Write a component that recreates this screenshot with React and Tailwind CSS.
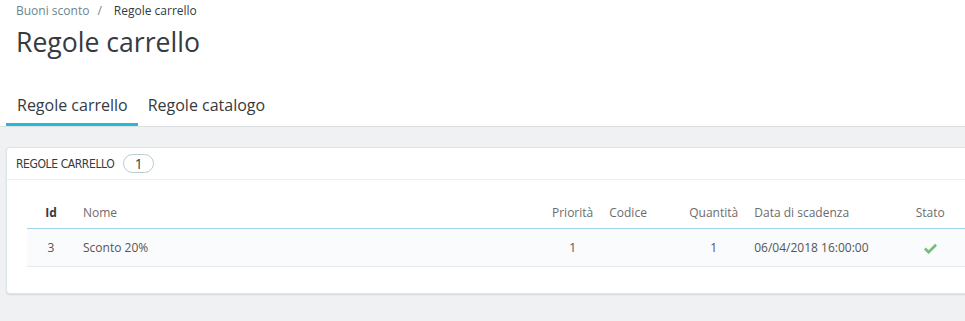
import React from 'react';

const columns = [
  { key: 'id', label: 'Id', width: 'w-[48px]', align: 'text-center', bold: true },
  { key: 'name', label: 'Nome', width: 'w-[469px]', align: 'text-left' },
  { key: 'priority', label: 'Priorità', width: 'w-[56px]', align: 'text-center' },
  { key: 'code', label: 'Codice', width: 'w-[80px]', align: 'text-left' },
  { key: 'quantity', label: 'Quantità', width: 'w-[65px]', align: 'text-center' },
  { key: 'date', label: 'Data di scadenza', width: 'w-[160px]', align: 'text-left' },
  { key: 'status', label: 'Stato', width: 'w-[48px]', align: 'text-center' },
  { key: 'actions', label: '', width: 'w-[120px]', align: 'text-right' },
];

const rules = [
  { id: 3, name: 'Sconto 20%', priority: 1, code: '', quantity: 1, date: '06/04/2018 16:00:00', active: true },
];

const CheckIcon = () => (
  <svg width="13" height="11" viewBox="0 0 24 20" className="inline-block">
    <path d="M8.5 13.4 3.4 8.3 0 11.7 8.5 20.2 24 4.7 20.6 1.3z" fill="#72bf78" />
  </svg>
);

const App = () => {
  return (
    <div className="w-[965px] h-[321px] overflow-hidden bg-[#eff1f2] font-['Open_Sans',sans-serif] text-[#363a41]">
      <div className="bg-white border-b border-[#dcdfe1]">
        <div className="pl-4 pt-[3px] text-[12px] leading-4">
          <span className="text-[#6c868e]">Buoni sconto</span>
          <span className="text-[#6c868e] ml-[8px] mr-[12px]">/</span>
          <span className="text-[#363a41]">Regole carrello</span>
        </div>
        <h1 className="pl-4 mt-[7px] text-[26.6px] leading-[32px] font-normal">Regole carrello</h1>
        <div className="flex mt-[36px] pl-[6px]">
          <div className="pl-[11px] pr-[10px] pb-[7px] text-[16px] leading-[22px] border-b-[3px] border-[#25b9d7]">Regole carrello</div>
          <div className="px-[10px] pb-[7px] text-[16px] leading-[22px] border-b-[3px] border-transparent">Regole catalogo</div>
        </div>
      </div>

      <div className="pt-5 pl-[6px]">
        <div className="w-[1100px] bg-white border border-[#dbe6e9] rounded-[4px] shadow-[0_1px_2px_rgba(0,0,0,0.1)]">
          <div className="h-[32px] flex items-center px-[9px] border-b border-[#eeeeee]">
            <span className="font-['DejaVu_Sans_Condensed','DejaVu_Sans',sans-serif] font-stretch-condensed text-[12px] tracking-[-0.4px] uppercase text-[#363a41]">Regole carrello</span>
            <span className="ml-[9px] h-[19px] w-[31px] flex items-center justify-center rounded-full border border-[#bbcdd2] text-[14px] leading-none">1</span>
          </div>
          <div className="pt-4 pb-[26px] pl-5">
            <table className="table-fixed border-collapse text-[12px]">
              <thead>
                <tr className="h-[32px] border-b border-[#a3d4ec]">
                  {columns.map(c => (
                    <th key={c.key} className={`${c.width} ${c.align} px-2 pt-[2px] align-middle ${c.bold ? 'font-bold text-[#363a41]' : 'font-normal text-[#6c6c6c]'}`}>
                      {c.label}
                    </th>
                  ))}
                </tr>
              </thead>
              <tbody>
                {rules.map(r => (
                  <tr key={r.id} className="h-[38px] bg-[#fafbfc] border-b border-[#e5eaec] text-[#555]">
                    <td className="text-center px-2 pt-[1px]">{r.id}</td>
                    <td className="px-2 pt-[1px]">{r.name}</td>
                    <td className="text-center px-2 pt-[1px]">{r.priority}</td>
                    <td className="px-2">{r.code}</td>
                    <td className="text-center px-2 pt-[1px]">{r.quantity}</td>
                    <td className="px-2 pt-[1px]">{r.date}</td>
                    <td className="text-center px-2 pt-[2px]">{r.active && <CheckIcon />}</td>
                    <td className="px-2"></td>
                  </tr>
                ))}
              </tbody>
            </table>
          </div>
        </div>
      </div>
    </div>
  );
};

export default App;
